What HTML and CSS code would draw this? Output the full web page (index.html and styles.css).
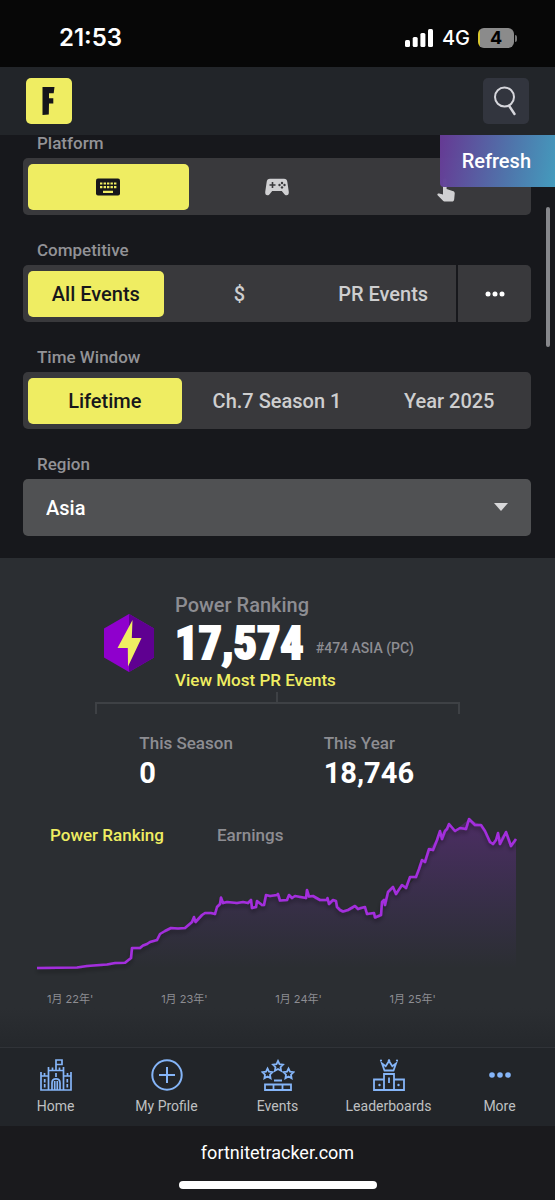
FILE: index.html
```html
<!DOCTYPE html>
<html lang="en">
<head>
<meta charset="utf-8">
<meta name="viewport" content="width=device-width, initial-scale=1">
<title>Fortnite Tracker</title>
<link rel="stylesheet" href="styles.css">
</head>
<body>
<div class="statusbar">
  <span class="clock">21:53</span>
  <div class="status-icons">
    <svg width="29" height="18" viewBox="0 0 29 18" fill="#fff" aria-hidden="true"><rect x="0" y="11" width="5" height="7" rx="1.500"/><rect x="7.700" y="8" width="5" height="10" rx="1.500"/><rect x="15.400" y="4" width="5" height="14" rx="1.500"/><rect x="23" y="0" width="5" height="18" rx="1.500"/></svg>
    <span class="network">4G</span>
    <span class="battery">4</span>
  </div>
</div>
<header class="header">
  <a class="logo" href="#" aria-label="Home page">
    <svg width="46" height="46" viewBox="0 0 46 46" aria-hidden="true"><path d="M16.500 9h12l-.8 6.300h-4.700v5h4.300v5.200h-4.300l-.2 11-6.300.5z" fill="#15151a"/></svg>
  </a>
  <button class="search" type="button" aria-label="Search">
    <svg width="46" height="46" viewBox="0 0 46 46" fill="none" stroke="#d6d6dc" stroke-width="2" stroke-linecap="round" aria-hidden="true"><circle cx="21.500" cy="19" r="9.500"/><path d="M26.200 28l5.300 8" stroke-width="2.400"/></svg>
  </button>
</header>
<main class="main">
  <button class="refresh" type="button">Refresh</button>
  <span class="scrollbar"></span>
  <section class="filters">
    <div class="field" role="group" aria-labelledby="lbl-platform">
      <span class="label" id="lbl-platform">Platform</span>
      <div class="segment">
        <button class="option active" type="button" aria-label="Keyboard and mouse">
          <svg width="24" height="18" viewBox="0 0 24 18" aria-hidden="true"><rect y="0.500" width="24" height="17" rx="2" fill="#17171b"/><path d="M4 5.500h2.400M7.600 5.500h2.400M11 5.500h2.400M14.500 5.500h2.400M18 5.500h2.400M4 9.200h2.400M7.600 9.200h2.400M11 9.200h2.400M14.500 9.200h2.400M18 9.200h2.400M7 13.900h10" stroke="#efed62" stroke-width="2.200"/></svg>
        </button>
        <button class="option" type="button" aria-label="Controller">
          <svg width="24" height="18" viewBox="0 0 24 18" aria-hidden="true"><path d="M5 .8h14c2 0 3 1 3.300 3L23.800 14c.2 2-.7 3.300-2.300 3.300-1 0-1.700-.5-2.300-1.300L16.800 13H7.200l-2.400 3c-.6.800-1.300 1.300-2.300 1.300C.9 17.300 0 16 .2 14L1.700 3.800c.3-2 1.300-3 3.300-3z" fill="#d0d0d2"/><path d="M7.500 4v6M4.500 7h6" stroke="#39393c" stroke-width="1.600"/><g fill="#39393c"><circle cx="17" cy="5" r="1.200"/><circle cx="14.500" cy="7" r="1.200"/><circle cx="19.500" cy="7" r="1.200"/><circle cx="17" cy="9.400" r="1.200"/></g></svg>
        </button>
        <button class="option" type="button" aria-label="Touch">
          <svg width="18" height="30" viewBox="0 0 18 30" aria-hidden="true"><path d="M6 8.500c0-2.600 3.600-2.600 3.600 0V17l6 2c1.500.5 2.300 1.200 2.100 2.800l-.5 5.400c-.1 1.500-1 2.300-2.300 2.300H8c-1 0-1.600-.4-2.200-1L.6 23.300c-.8-1 .3-2.200 1.600-1.800L6 22.500z" fill="#d0d0d2"/></svg>
        </button>
      </div>
    </div>
    <div class="field" role="group" aria-labelledby="lbl-comp">
      <span class="label" id="lbl-comp">Competitive</span>
      <div class="split">
        <div class="segment">
          <button class="option active" type="button">All Events</button>
          <button class="option" type="button">$</button>
          <button class="option" type="button">PR Events</button>
        </div>
        <button class="overflow" type="button" aria-label="More events">
          <svg width="20" height="6" viewBox="0 0 20 6" fill="#fff" aria-hidden="true"><circle cx="3" cy="3" r="2.500"/><circle cx="10" cy="3" r="2.500"/><circle cx="17" cy="3" r="2.500"/></svg>
        </button>
      </div>
    </div>
    <div class="field" role="group" aria-labelledby="lbl-time">
      <span class="label" id="lbl-time">Time Window</span>
      <div class="segment">
        <button class="option active" type="button">Lifetime</button>
        <button class="option" type="button">Ch.7 Season 1</button>
        <button class="option" type="button">Year 2025</button>
      </div>
    </div>
    <div class="field">
      <label class="label" for="region">Region</label>
      <div class="select">
        <select id="region"><option>Asia</option></select>
        <svg class="caret" width="14" height="8" viewBox="0 0 14 8" aria-hidden="true"><path d="M0 0h14L7 8z" fill="#d8d8da"/></svg>
      </div>
    </div>
  </section>
  <section class="ranking">
    <div class="rank-head">
      <svg class="hex" width="50" height="58" viewBox="0 0 50 58" aria-hidden="true"><path d="M25 0l25 14.500v29L25 58 0 43.500v-29z" fill="#8f00cd"/><path d="M25 0l25 14.500v29L25 58z" fill="#5f0091"/><path d="M28.500 6L13.500 34h10.300L24 52.500 37.500 24H27.800z" fill="#efed62"/></svg>
      <div class="rank-text">
        <h2 class="rank-title">Power Ranking</h2>
        <div class="rank-row"><strong class="rank-value">17,574</strong><span class="rank-place">#474 ASIA (PC)</span></div>
        <a class="rank-link" href="#">View Most PR Events</a>
      </div>
    </div>
    <div class="breakdown">
      <div class="stem"></div>
      <div class="bracket"></div>
      <dl class="stats">
        <div><dt>This Season</dt><dd>0</dd></div>
        <div><dt>This Year</dt><dd>18,746</dd></div>
      </dl>
    </div>
    <div class="chart">
      <div class="tabs">
        <button class="tab current" type="button">Power Ranking</button>
        <button class="tab" type="button">Earnings</button>
      </div>
      <svg class="plot" viewBox="37 814 481 158" role="img" aria-label="Power ranking history">
        <defs>
          <linearGradient id="area" x1="0" y1="0" x2="0" y2="1"><stop offset="0" stop-color="#9b2bd6" stop-opacity=".3"/><stop offset="1" stop-color="#7a3ad6" stop-opacity="0"/></linearGradient>
          <filter id="glow" x="-5%" y="-5%" width="110%" height="120%"><feDropShadow dx="0" dy="3" stdDeviation="2" flood-color="#000" flood-opacity=".35"/></filter>
          <path id="series" d="M37 968L77 967.500 87 966 100 965 107 964.500 115 963 125 962.700 131 958 132 948 140 948 143 945.500 147 944 150 942 157 940 160 934 165 931 171 928 178 928.500 185 928 192 922 194 917 195.500 922 202 915 205 913 211 913 215 914 217 907 220 904 221 897.500 223 903 227 902 237 903 243 902 248 903 251 900 252 908 256 907 257 901 262 905 264 905 266 895 270 896 277 895 278 894 280 900.500 287 900 289 895 292 898 295 896 306 898 307 890 309 896.500 313 896 320 900 327 900 327.500 898 329 904 333 900 336 901 337 907 340 910 343 911.500 348 910 355 906 358 909 361 908 365 907 367 914 374 913 375 917.500 381 915 382 902 384 900 385 905 388 892 393 887 396 894 402 885 406 888 410 877 416 877 419 869 422 860 425 862 429 849 433 850 437 840 440 831 442 839 445 831 447 829 449 824 455 831 460 828 466 829 469 819 475 825 481 825 485 831 490 842 493 844 496 840 498 833 500 844 506 832 511 846 516 839"/>
        </defs>
        <path d="M37 968L115 963 131 958 132 948 157 940 171 928 185 928 205 913 215 914 221 903 248 903 252 908 264 905 266 895 277 895 280 900 309 897 336 901 343 911 365 907 367 914 381 915 382 902 393 887 396 894 406 888 416 877 429 849 449 824 455 831 469 819 481 825 493 844 506 832 511 846 516 839V968z" fill="url(#area)"/>
        <use href="#series" fill="none" stroke="#a32fdd" stroke-width="2.600" stroke-linejoin="round" filter="url(#glow)"/>
      </svg>
    </div>
    <div class="axis"><span>1月 22年'</span><span>1月 23年'</span><span>1月 24年'</span><span>1月 25年'</span></div>
  </section>
</main>
<nav class="nav">
  <a href="#"><svg width="32" height="32" viewBox="0 0 32 32" fill="none" stroke="#85b5f8" stroke-width="1.700" aria-hidden="true"><path d="M1 13v18h30V13M1 17h7.500M23.500 17H31M4.500 14v3M27.500 14v3M8.500 31V8M23.500 31V8M8.500 11.500h15M12.500 8.500v3M19.500 8.500v3M16 11V1h6v4.500h-6M12 31v-7c0-5.500 8-5.500 8 0v7M14.700 31v-9M17.300 31v-9M16 14v4M4.700 20v3.500M4.700 25v3.500M27.300 20v3.500M27.300 25v3.500"/></svg>Home</a>
  <a href="#"><svg width="32" height="32" viewBox="0 0 32 32" fill="none" stroke="#85b5f8" stroke-width="2" aria-hidden="true"><circle cx="16" cy="16" r="14.700"/><path d="M16 8v16M8 16h16"/></svg>My Profile</a>
  <a href="#"><svg width="34" height="32" viewBox="0 0 34 32" fill="none" stroke="#85b5f8" stroke-width="1.800" aria-hidden="true"><path id="star" d="M17 2l1.500 3.200 3.500.5-2.500 2.500.6 3.500-3.100-1.700-3.100 1.700.6-3.500L12 5.700l3.500-.5z"/><use href="#star" x="-10.500" y="7.500"/><use href="#star" x="10.500" y="7.500"/><path d="M13 21.500h8M4 25.500h26V31H4zM12.500 25.500V31M21.500 25.500V31"/></svg>Events</a>
  <a href="#"><svg width="32" height="32" viewBox="0 0 32 32" fill="none" stroke="#85b5f8" stroke-width="1.800" aria-hidden="true"><path d="M11 31V15h10v16M11 20.500H1V31h30V20.500H21M16 18.500V24M9 4.500l2.500 7h9l2.500-7-3.700 2.700L16 2l-3.300 5.200z"/><g fill="#85b5f8" stroke="none"><circle cx="6.500" cy="26" r="1.200"/><circle cx="25.500" cy="26" r="1.200"/><circle cx="8" cy="1.500" r="1.100"/><circle cx="16" cy="1.500" r="1.200"/><circle cx="24" cy="1.500" r="1.100"/></g></svg>Leaderboards</a>
  <a href="#"><svg width="32" height="32" viewBox="0 0 32 32" fill="#85b5f8" aria-hidden="true"><circle cx="8" cy="16" r="2.800"/><circle cx="16" cy="16" r="2.800"/><circle cx="24" cy="16" r="2.800"/></svg>More</a>
</nav>
<footer class="browser">
  <span class="url">fortnitetracker.com</span>
  <span class="home-bar"></span>
</footer>
</body>
</html>
```

FILE: styles.css
```css
* { box-sizing: border-box; }
body {
  margin: 0;
  min-height: 100vh;
  display: flex;
  flex-direction: column;
  background: #17181c;
  color: #fff;
  font: 500 17px/20px Roboto, "Noto Sans CJK SC", sans-serif;
}
button, select { font: inherit; color: inherit; border: 0; margin: 0; }
button { padding: 0; cursor: pointer; }
svg { display: block; flex: none; }
a { color: inherit; text-decoration: none; }

.statusbar {
  height: 67px;
  padding: 8px 41px 0 59px;
  display: flex;
  align-items: center;
  justify-content: space-between;
  background: #070707;
  font-family: Inter, sans-serif;
}
.clock { font-size: 24px; font-weight: 600; }
.status-icons { display: flex; align-items: center; gap: 8px; }
.network { font-size: 20px; }
.battery {
  position: relative;
  width: 36px;
  height: 20px;
  border-radius: 6px;
  background: linear-gradient(90deg, #d9c72e 2px, #8b8b8b 2px);
  color: #000;
  font-size: 18px;
  font-weight: 700;
  text-align: center;
}
.battery::after {
  content: "";
  position: absolute;
  right: -3px;
  top: 7px;
  width: 2px;
  height: 7px;
  border-radius: 0 2px 2px 0;
  background: #777;
}

.header {
  height: 68px;
  padding: 0 26px;
  display: flex;
  align-items: center;
  justify-content: space-between;
  background: #222529;
}
.logo { border-radius: 5px; background: #efed62; }
.search { border-radius: 5px; background: #32353e; }

.main { position: relative; flex: 1; display: flex; flex-direction: column; }
.refresh {
  position: absolute;
  z-index: 1;
  top: 0;
  right: 0;
  height: 52px;
  padding: 0 24px 1px 22px;
  border-radius: 0 0 0 4px;
  background: linear-gradient(100deg, rgba(103, 58, 150, .98), #4f75ab 60%, #449bbd);
  font-size: 20px;
}
.scrollbar {
  position: absolute;
  top: 72px;
  right: 5px;
  width: 4px;
  height: 140px;
  border-radius: 2px;
  background: #87888c;
}

.filters { display: flex; flex-direction: column; gap: 27px; padding: 0 24px 22px 23px; }
.field { display: flex; flex-direction: column; gap: 7px; }
.label { padding-left: 14px; line-height: 16px; color: #929296; }
.segment { flex: 1; display: flex; gap: 8px; padding: 6px 5px 5px; border-radius: 5px; background: #39393c; }
.option {
  flex: 1 1 0;
  height: 46px;
  padding: 0 23px;
  display: flex;
  align-items: center;
  justify-content: center;
  border-radius: 5px;
  background: none;
  color: #cececf;
  font-size: 20px;
  white-space: nowrap;
}
.option.active { background: #efed62; color: #17171b; }
.split { display: flex; gap: 2px; }
.split .segment { border-radius: 5px 0 0 5px; }
.split .option { padding: 0; }
.overflow {
  width: 73px;
  display: flex;
  align-items: center;
  justify-content: center;
  border-radius: 0 5px 5px 0;
  background: #39393c;
}
.select { position: relative; }
.select select {
  display: block;
  width: 100%;
  height: 57px;
  padding: 0 48px 0 23px;
  appearance: none;
  border-radius: 5px;
  background: #505153;
  font-size: 20px;
}
.caret { position: absolute; right: 23px; top: 24px; pointer-events: none; }

.ranking {
  flex: 1;
  padding: 35px 37px 0;
  background: linear-gradient(#2b2e32 92%, #25282c);
}
.rank-head { display: flex; align-items: center; gap: 21px; padding-left: 67px; }
.rank-title { margin: 0; color: #8d8d92; font-size: 20px; font-weight: 500; line-height: 24px; }
.rank-row { display: flex; align-items: center; gap: 12px; height: 51px; }
.rank-value {
  font: 800 46px/46px "Roboto Condensed", "Liberation Sans Narrow", Roboto, sans-serif;
  -webkit-text-stroke: 2px #fff;
}
.rank-place { padding-top: 10px; color: #8d8d92; font-size: 14px; }
.rank-link { display: block; color: #efed62; font-size: 17px; line-height: 24px; }
.breakdown { width: 76%; margin: 0 auto; }
.stem { width: 2px; height: 10px; margin: 0 auto; background: #3e4145; }
.bracket { height: 12px; border: 2px solid #3e4145; border-bottom: 0; }
.stats { display: grid; grid-template-columns: 1fr 1fr; justify-items: center; margin: 17px 0 0; }
.stats dt { color: #8d8d92; line-height: 24px; }
.stats dd { margin: 0; font-size: 29px; font-weight: 700; line-height: 36px; }
.chart { display: grid; margin-top: 23px; }
.tabs, .plot { grid-area: 1 / 1; }
.tabs { display: flex; align-items: flex-start; gap: 53px; padding: 11px 13px; z-index: 1; }
.tab { background: none; color: #8d8d92; }
.tab.current { color: #efed62; }
.plot { width: 100%; height: auto; overflow: visible; }
.axis {
  display: grid;
  grid-template-columns: repeat(4, 1fr);
  width: 97%;
  padding-left: 10px;
  margin-top: 19px;
  color: #8d8d92;
  font: 400 11px/16px Inter, "Noto Sans CJK SC", sans-serif;
}

.nav {
  display: grid;
  grid-template-columns: repeat(5, 1fr);
  height: 79px;
  padding-top: 11px;
  border-top: 1px solid #303338;
  background: #222529;
  color: #bfc0c2;
  font-size: 14px;
  font-weight: 400;
}
.nav a { display: flex; flex-direction: column; align-items: center; gap: 5px; }
.browser {
  height: 74px;
  padding: 17px 0 11px;
  display: flex;
  flex-direction: column;
  align-items: center;
  justify-content: space-between;
  background: #1a1a1d;
  font: 400 18px/20px Roboto, sans-serif;
}
.home-bar { width: 198px; height: 8px; border-radius: 4px; background: #fff; }
```
